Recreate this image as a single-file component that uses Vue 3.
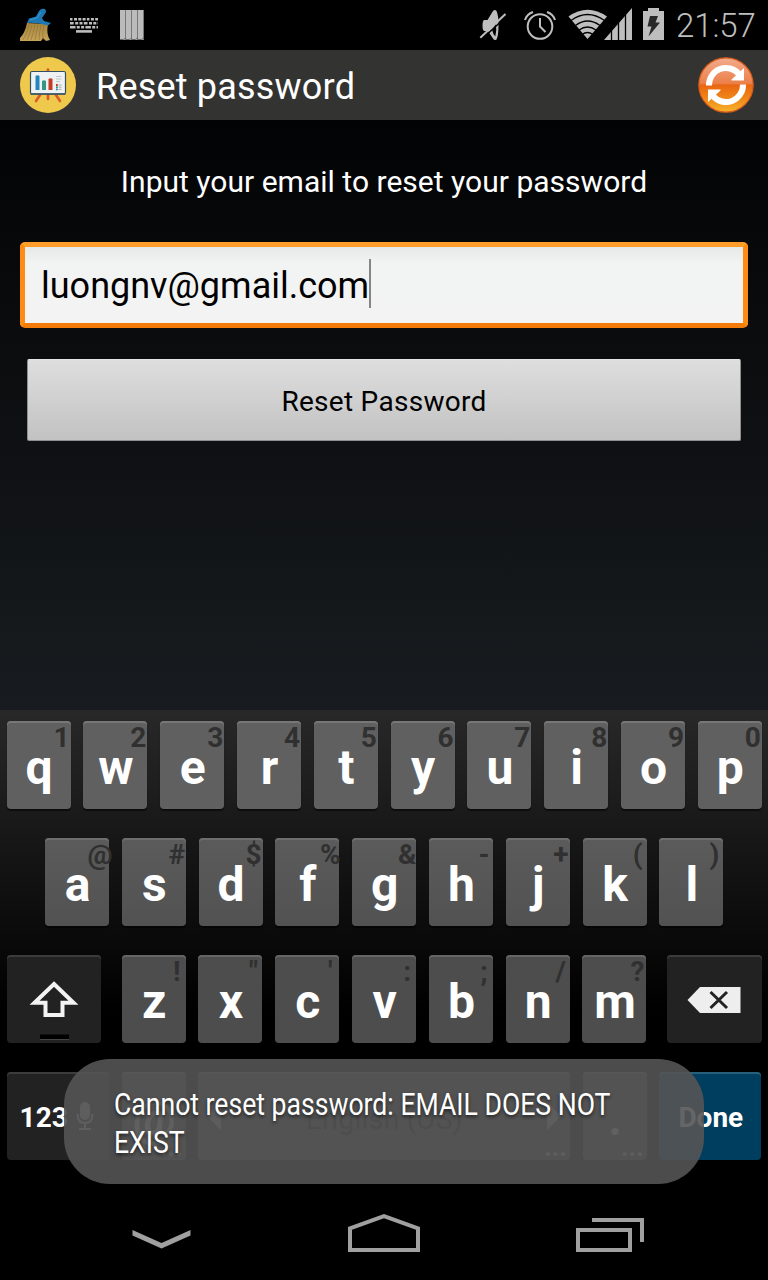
<script setup>
const letters = (chars, hints) => chars.split('').map((label, i) => ({ label, hint: hints[i] }))
const topRow = letters('qwertyuiop', '1234567890')
const homeRow = letters('asdfghjkl', '@#$%&-+()')
const bottomRow = letters('zxcvbnm', '!"\':;/?')
const bristles = [0, 1, 2, 3, 4, 5]
</script>

<template>
  <div class="screen">
    <header class="status">
      <svg class="notify" width="160" height="50" viewBox="0 0 160 50">
        <defs>
          <linearGradient id="straw" x1="0" y1="0" x2="0" y2="1">
            <stop offset="0" stop-color="#a5843c" />
            <stop offset="1" stop-color="#c6a559" />
          </linearGradient>
        </defs>
        <path d="M27 23 L48 24 Q46 34 50 40 L46 41 L43 38 L41 41 L20 41 L20 38 Q25 33 27 23Z" fill="url(#straw)" />
        <path v-for="n in bristles" :key="n" :d="`M${29 + n * 3} 25 Q${27 + n * 3} 34 ${23 + n * 4} 40`" fill="none" stroke="#8a6c34" stroke-width=".6" />
        <path d="M29 18.500 L36 16.500 L39 11 Q41 8 45 9 Q47 11 45.500 13 L42 18 L44 21 L51 23 L48 25.500 Q36 22 27 23Z" fill="#1d78b3" />
        <path d="M41 12 L37 18 L30 20" fill="none" stroke="#399bd0" />
        <g stroke="#bdbdbd" stroke-width="2.600" fill="none">
          <path d="M70 19.300H98" stroke-dasharray="2.500 1.500 3 1.300 3 1.300 3 1.300" />
          <path d="M70 23.300H98" stroke-dasharray="3.700 1.500 3 1.300 3 1.300" />
          <path d="M70 27.300H98" stroke-dasharray="5.500 1.300 3 1.300 3 1.300" />
          <path d="M76 31.400H92" />
        </g>
        <path d="M120 10h24v30h-24z" fill="#bbb" />
        <path d="M125.500 10v30M131.500 10v30M137.500 10v30M143.500 10v30" stroke="#777" />
        <path d="M120 39.500h3.500l2-1.500M126 39.500h3.500l2-1.500M132 39.500h3.500l2-1.500M138 39.500h3.500l2-1.500" fill="none" stroke="#666" />
      </svg>
      <div class="system">
        <svg width="200" height="50" viewBox="470 0 200 50">
          <path d="M484 20H487.500L493 11Q495 9 496.500 11Q498.500 15 498.500 25Q498.500 36 496.500 39.500Q494.500 41 493 38.500L488 31H484Q482.500 30 482.500 25.500Q482.500 21 484 20Z" fill="#bebebe" />
          <path d="M495.800 23.500Q497 30 495.300 36.500Q493.300 35 492.300 30.500Z" fill="#000" />
          <path d="M481.500 39.500L507.500 15.500" stroke="#000" stroke-width="1.600" />
          <path d="M480.300 37.700L505.500 14" stroke="#bebebe" stroke-width="2" />
          <g fill="none" stroke="#bebebe" stroke-width="2">
            <circle cx="540" cy="26.500" r="12.300" />
            <path d="M540 18v8.500l5.500 5.500M525 20q2-6 8-8M555 20q-2-6-8-8" />
          </g>
          <path d="M587.500 39 L568.500 16.500 Q587.500 3 607 16.500Z" fill="#bebebe" />
          <g fill="none" stroke="#000" stroke-width="1.300">
            <path d="M571 20.500Q587.500 8.500 604.500 20.500M575.500 25.500Q587.500 16.500 600 25.500M579 30Q587.500 24 596 30M582 34.500Q587.500 30.500 593 34.500" />
          </g>
          <path d="M604 40L632 8v32z" fill="#bebebe" />
          <path d="M611.500 29v12M618.500 22v19M625.500 14v27" stroke="#000" stroke-width="1.300" />
          <path d="M643 11h5V8h11v3h5v29h-21z" fill="#bebebe" />
          <path d="M650 16h8l-2.500 6.500h4.500L648.500 36.500l3-10h-4z" fill="#292929" />
        </svg>
        <span class="clock">21:57</span>
      </div>
    </header>

    <div class="actionbar">
      <svg width="56" height="56" viewBox="0 0 56 56">
        <circle cx="28" cy="28" r="28" fill="#efc94c" />
        <path d="M28 12.500v2M28 38v4M20 38l-4 6M36 38l4 6" stroke="#dc5a2d" stroke-width="2.700" stroke-linecap="round" />
        <rect x="10.500" y="14.500" width="35" height="22.500" rx="1.500" fill="#eef2f3" stroke="#345064" stroke-width="1.200" />
        <path d="M10.500 37h35" stroke="#345064" stroke-width="1.500" />
        <path d="M15.500 19q2-1.500 4 0v14h-4z" fill="#2385bd" />
        <path d="M22 24q2-1.500 4 0v9h-4z" fill="#379682" />
        <path d="M28.500 22q2-1.500 4 0v11h-4z" fill="#c43a27" />
        <path d="M36 19.500h5.500M36 22h5.500M36 24.500h4" stroke="#c2c5c7" stroke-width="1.200" />
        <path d="M36 28h1.800" stroke="#c43a27" stroke-width="1.800" /><path d="M36 30.200h1.800" stroke="#379682" stroke-width="1.800" /><path d="M36 32.400h1.800" stroke="#2385bd" stroke-width="1.600" />
        <path d="M38.500 28h3M38.500 30.200h3M38.500 32.400h3" stroke="#aaa" />
      </svg>
      <h1>Reset password</h1>
      <svg width="56" height="56" viewBox="0 0 56 56">
        <defs>
          <linearGradient id="orb" x1="0" y1="0" x2="0" y2="1">
            <stop offset="0" stop-color="#f2ab8c" /><stop offset=".47" stop-color="#eb8049" />
            <stop offset=".5" stop-color="#e96612" /><stop offset=".75" stop-color="#ef8719" /><stop offset="1" stop-color="#f8b42c" />
          </linearGradient>
        </defs>
        <circle cx="28" cy="28" r="27.200" fill="url(#orb)" stroke="#d55a1b" stroke-width="1.200" />
        <g fill="none" stroke="#fff" stroke-width="6">
          <path d="M11 28.500A17 17 0 0 1 41 17" />
          <path d="M45 27.500A17 17 0 0 1 15 39" />
        </g>
        <path d="M46 11V23.500H33.500V22.500Z" fill="#fff" />
        <path d="M10 45V32.500H22.500V33.500Z" fill="#fff" />
      </svg>
    </div>

    <main>
      <p>Input your email to reset your password</p>
      <div class="field"><span>luongnv@gmail.com</span><i class="caret"></i></div>
      <button><span>Reset Password</span></button>
    </main>

    <section class="keyboard">
      <div class="row">
        <div v-for="k in topRow" :key="k.label" class="key"><b>{{ k.label }}</b><small>{{ k.hint }}</small></div>
      </div>
      <div class="row home">
        <div v-for="k in homeRow" :key="k.label" class="key"><b>{{ k.label }}</b><small>{{ k.hint }}</small></div>
      </div>
      <div class="row ends">
        <div class="key dark wide">
          <svg width="94" height="88" viewBox="0 0 94 88">
            <path d="M47 29L66.500 47.800H55.500V60H38.500V47.800H27.500Z" fill="none" stroke="#f3f3f3" stroke-width="4" />
            <path d="M33 79.500h29v5h-29z" fill="#000" /><path d="M33 84.500h29" stroke="#444" />
          </svg>
        </div>
        <div class="letters">
          <div v-for="k in bottomRow" :key="k.label" class="key"><b>{{ k.label }}</b><small>{{ k.hint }}</small></div>
        </div>
        <div class="key dark wide">
          <svg width="94" height="88" viewBox="0 0 94 88">
            <path d="M20.500 45L33 32H73.500V58H33Z" fill="#eee" />
            <path d="M43.500 37L60 53M60 37L43.500 53" stroke="#222" stroke-width="3" />
          </svg>
        </div>
      </div>
      <div class="row last">
        <div class="key dark func num">
          <span>123</span>
          <svg width="18" height="30" viewBox="0 0 18 30"><rect x="4" y="1" width="10" height="18" rx="5" fill="#bbb" /><path d="M1.500 13Q1.500 22 9 22Q16.500 22 16.500 13M9 22v5M3 28h12" fill="none" stroke="#bbb" stroke-width="2" /></svg>
        </div>
        <div class="key symbol"><b>@</b><em>...</em></div>
        <div class="key space">
          <svg width="14" height="28" viewBox="0 0 14 28"><path d="M14 0v28L0 14z" fill="#aaa" /></svg>
          <span>English (US)</span>
          <svg width="14" height="28" viewBox="0 0 14 28"><path d="M0 0v28l14-14z" fill="#aaa" /></svg>
          <em>...</em>
        </div>
        <div class="key symbol"><b>.</b><em>...</em></div>
        <div class="key func done"><span>Done</span></div>
      </div>
    </section>

    <nav>
      <svg width="768" height="90" viewBox="0 1190 768 90" fill="none" stroke="#a0a0a0">
        <path d="M132.500 1230V1235.500L161.500 1248.500L190.500 1235.500V1230L161.500 1243Z" class="solid" />
        <path d="M350 1228.300L384 1216.200L418 1228.300V1250H350Z" stroke-width="4" />
        <path d="M578 1230H630V1250H578ZM592 1220H642V1242" stroke-width="4" />
      </svg>
    </nav>

    <div class="toast"><div class="message">Cannot reset password: EMAIL DOES NOT<br>EXIST</div></div>
  </div>
</template>

<style scoped>
.screen { position: relative; width: 768px; height: 1280px; overflow: hidden; display: flex; flex-direction: column; background: #000; color: #fff; font-family: Roboto, "Liberation Sans", sans-serif; white-space: nowrap; }
svg { display: block; flex: none; }
.status { height: 50px; flex: none; display: flex; justify-content: space-between; }
.system { width: 298px; display: flex; }
.clock { margin-left: 6px; font-size: 33px; line-height: 52px; color: #bebebe; letter-spacing: -.1px; font-weight: 350; }
.actionbar { height: 70px; flex: none; box-sizing: border-box; padding: 0 14px 0 20px; display: flex; align-items: center; background: #333331; }
h1 { flex: 1; margin: 0 0 0 20px; font-size: 36px; font-weight: 400; line-height: 70px; padding-top: 3px; letter-spacing: .2px; }
main { height: 590px; flex: none; box-sizing: border-box; padding: 42px 20px 0; background: linear-gradient(#020304, #0c0e10 45%, #181c20); display: flex; flex-direction: column; }
p { margin: 0; height: 40px; font-size: 30px; line-height: 40px; text-align: center; letter-spacing: .02px; }
.field { margin-top: 40px; height: 86px; box-sizing: border-box; border: 5px solid #ff8b12; border-top-color: #ff9d29; border-bottom-color: #f27b09; border-radius: 5px; background: linear-gradient(#e7e9e8, #f2f3f3 22%, #f3f3f3); display: flex; align-items: center; padding-left: 16px; color: #000; font-size: 36px; line-height: 76px; }
.field span { padding-top: 2px; }
.caret { width: 2px; height: 49px; margin-bottom: 4px; background: #858585; }
button { height: 82px; margin: 31px 7px 0; padding: 2px 0 0; border: 1px solid #8e908f; border-top-color: #e3e5e4; border-radius: 2px; background: linear-gradient(#dedede, #c2c2c2); color: #000; font: 28px Roboto, sans-serif; letter-spacing: .28px; }
.keyboard { height: 490px; flex: none; box-sizing: border-box; padding: 11px 0 0 6.600px; display: flex; flex-direction: column; gap: 29px; background: linear-gradient(#282828, #000 62%); }
.row { height: 88px; display: flex; gap: 12.800px; }
.home { padding-left: 38.400px; }
.ends { gap: 20.500px; }
.letters { display: flex; gap: 12.800px; }
.key { position: relative; flex: none; width: 64px; height: 88px; border-radius: 4px; background: #606060; box-shadow: inset 0 2px 0 #777, 0 2px 1px #0008; text-align: center; }
.home .key { background: linear-gradient(#5b5b5b, #525252); box-shadow: inset 0 2px 0 #6e6e6e, 0 2px 1px #0008; }
.letters .key, .last .key { background: #4d4d4d; box-shadow: inset 0 2px 0 #656565; }
.ends .dark, .last .dark { background: #222; box-shadow: inset 0 2px 0 #3c3c3c; }
.wide { width: 94.600px; }
.key b { display: block; padding-left: 1px; font-size: 48px; line-height: 93px; }
.key small { position: absolute; left: 35px; top: 1px; width: 40px; font-size: 28px; line-height: 32px; font-weight: 700; color: #303030; }
.key em { position: absolute; right: 3px; bottom: 0; font: 700 26px/26px Roboto, sans-serif; color: #aaa; }
.symbol b { color: #ccc; }
.func { width: 102.300px; font-size: 28px; font-weight: 700; line-height: 90px; }
.num { display: flex; align-items: center; gap: 9px; padding-left: 13px; box-sizing: border-box; }
.num span { padding-top: 3px; }
.num svg { margin-left: -1px; }
.space { width: 371.400px; display: flex; align-items: center; justify-content: space-between; padding: 0 9px; box-sizing: border-box; font-size: 29px; color: #101010; }
.space span { padding-top: 5px; }
.last .done { background: #003e5f; box-shadow: inset 0 2px 0 #28607c; margin-left: -.300px; text-indent: 1px; line-height: 91px; }
nav { height: 80px; background: #000; display: flex; align-items: flex-end; }
.solid { fill: #a0a0a0; stroke: none; }
.toast { position: absolute; left: 64px; top: 1059px; width: 640px; height: 125px; border-radius: 46px; box-sizing: border-box; padding: 26px 50px 0; background: rgba(84, 84, 84, .9); }
.message { font-size: 32px; line-height: 38px; transform: scaleX(.831); transform-origin: left; text-shadow: 0 2px 4px #0009; }
</style>
